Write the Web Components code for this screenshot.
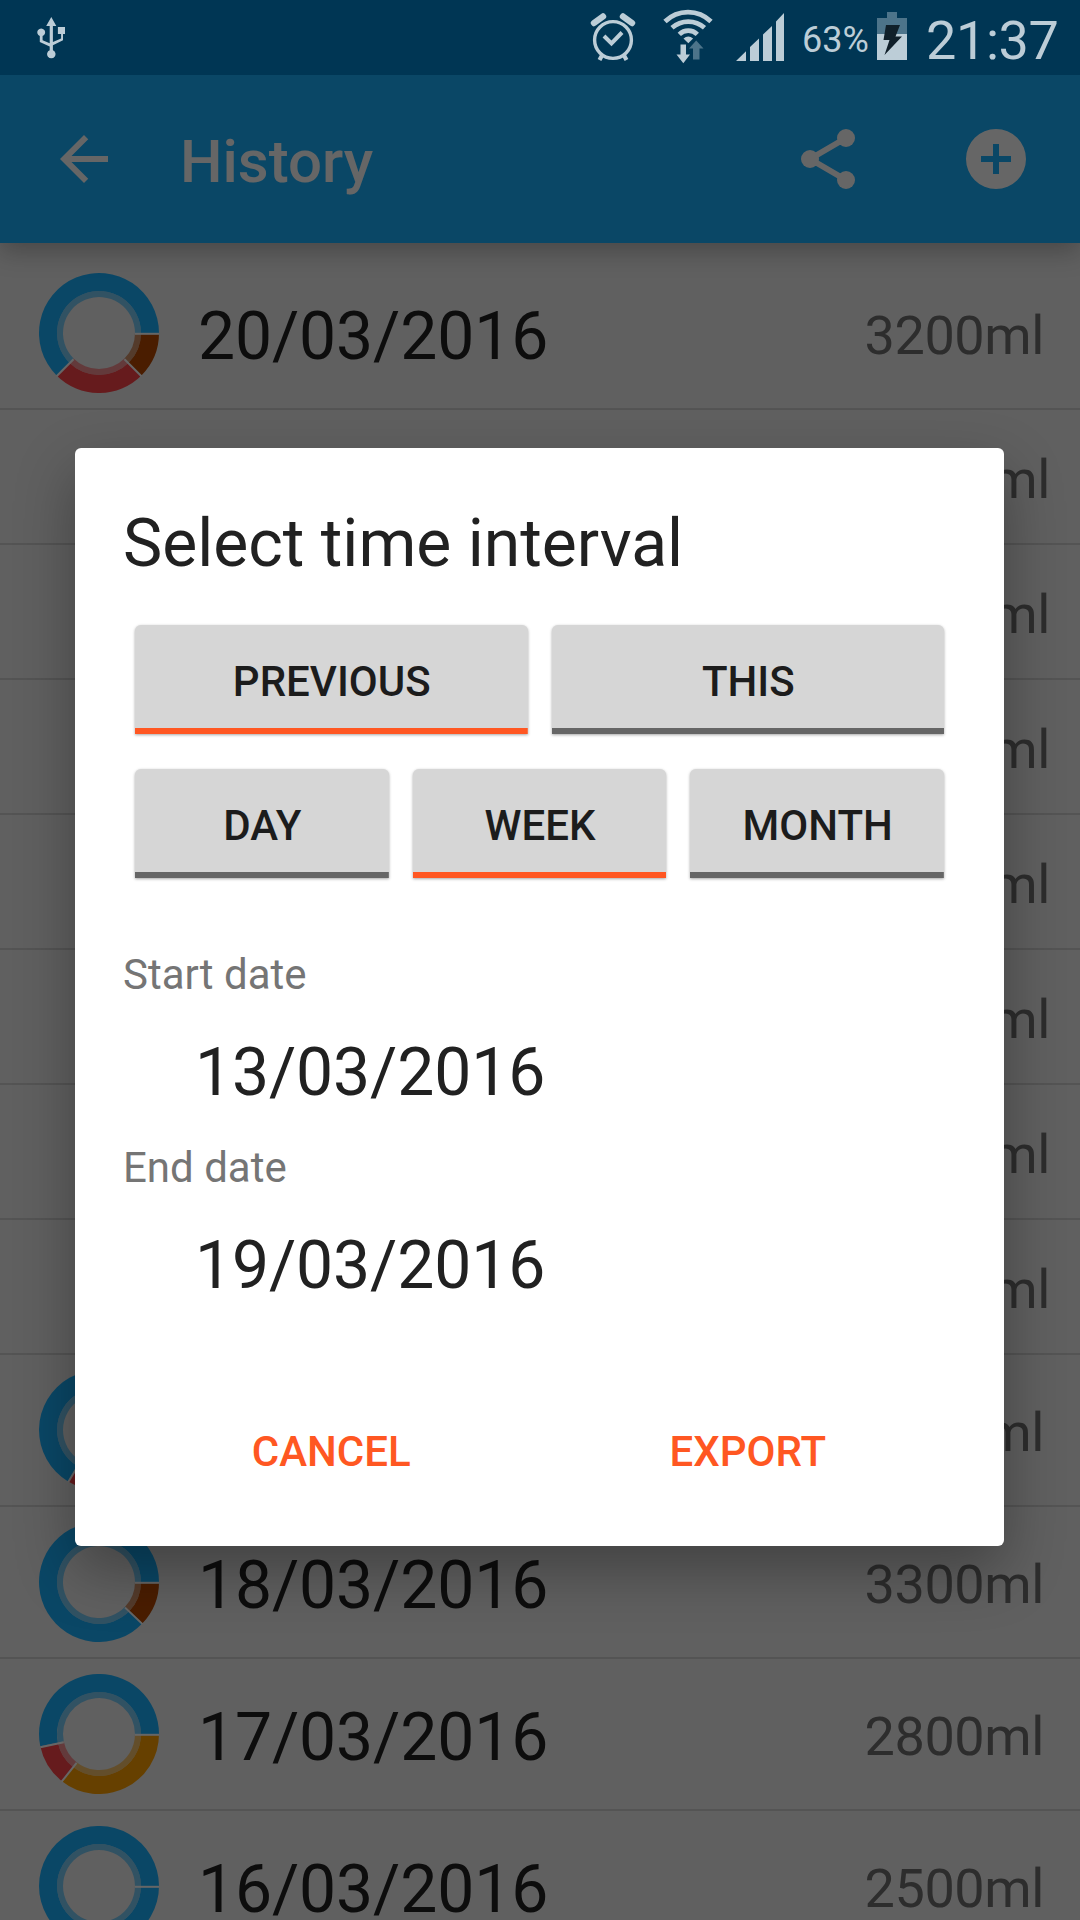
<!DOCTYPE html>
<html lang="en">
<head>
<meta charset="utf-8">
<title>History</title>
<style>
    body {
        margin: 0;
        width: 1080px;
        height: 1920px;
        overflow: hidden;
        background: #efefef;
        font-family: Roboto, "Liberation Sans", sans-serif;
    }
</style>
</head>
<body>
<history-app></history-app>

<script>
class StatusBar extends HTMLElement {

    constructor() {
        super();
        this.attachShadow({mode: "open"});
    }

    connectedCallback() {
        this.shadowRoot.innerHTML = `
        <style>
        :host {
            position: relative;
            z-index: 3;
            display: flex;
            align-items: flex-start;
            height: 75px;
            box-sizing: border-box;
            padding: 0 20px 0 36px;
            background: #003654;
            color: #bccdd7;
            fill: #bccdd7;
        }
        svg {
            display: block;
            flex: none;
            height: 75px;
        }
        .space {
            flex: 1;
        }
        .alarm {
            margin-right: 25px;
        }
        .wifi {
            margin-right: 21px;
        }
        .percent {
            width: 75px;
            margin-left: 18px;
            font-size: 36px;
            line-height: 80px;
            height: 75px;
        }
        .time {
            width: 134px;
            margin-left: 19px;
            font-size: 54px;
            line-height: 82px;
            height: 75px;
            letter-spacing: -0.4px;
            white-space: nowrap;
        }
        </style>
        <svg width="30" viewBox="36 0 30 75">
            <path d="M51.3 17l5 9h-3.4v16l8.2-3.5V34h-3.2v-7h7.1v7H63v6.2l-10.1 5v5a4.2 4.2 0 1 1-3.2 0v-3.8L39.8 42v-6a3.9 3.9 0 1 1 2.8 0v4.2l7.1 3V26h-3.5z"/>
        </svg>
        <div class="space"></div>
        <svg class="alarm" width="47" viewBox="590 0 47 75">
            <g fill="none" stroke="#bccdd7">
                <circle cx="613" cy="40" r="18.4" stroke-width="3.4"/>
                <path d="M604 36l7.5 7.5 10.5-11" stroke-width="4"/>
                <path d="M594 23l9-6.5M632 23l-9-6.5" stroke-width="6.4" stroke-linecap="round"/>
                <path d="M602.5 54.500l-3 5.500M623.500 54.500l3 5.500" stroke-width="4.200"/>
            </g>
        </svg>
        <svg class="wifi" width="53" viewBox="662 0 53 75">
            <g fill="none" stroke="#bccdd7" stroke-width="4.7">
                <path d="M665 21.500a32.700 32.700 0 0 1 46 0"/>
                <path d="M672 27.800a24.400 24.400 0 0 1 32.500 0"/>
                <path d="M679.300 34.300a12.800 12.800 0 0 1 18 0"/>
            </g>
            <path d="M683.500 38.500q4.800-4 9.600 0l-4.800 4.800z"/>
            <path d="M680.500 44.500h5.500v10h4l-6.700 8.800-6.800-8.800h4z"/>
            <path fill="#4d748a" d="M693 59.500h6.500v-11h4L696.200 40.500l-7.200 8h4z"/>
        </svg>
        <svg width="48" viewBox="736 0 48 75">
            <path d="M736 61l10-9.700V61zM750 61V47l9-8.500V61zM763 61V34.500l9-8.500v35zM776 61V21.500l8-8.500v48z"/>
        </svg>
        <div class="percent">63%</div>
        <svg width="30" viewBox="877 0 30 75">
            <path fill="#4d748a" d="M887 12h10v6h10v16h-30V18h10z"/>
            <path d="M877 34h30v26h-30z"/>
            <path fill="#10202a" d="M886 25h14l-4.500 11.500h6.500L884.500 55l5-15h-6z"/>
        </svg>
        <div class="time">21:37</div>
        `;
    }
}

class AppBar extends HTMLElement {

    constructor() {
        super();
        this.attachShadow({mode: "open"});
    }

    connectedCallback() {
        this.shadowRoot.innerHTML = `
        <style>
        :host {
            position: relative;
            z-index: 1;
            display: flex;
            align-items: center;
            height: 168px;
            box-sizing: border-box;
            padding: 0 48px;
            background: #19b1ff;
            color: #fff;
            box-shadow: 0 8px 24px rgba(0,0,0,0.26);
        }
        svg {
            display: block;
            width: 72px;
            height: 72px;
            fill: #fff;
        }
        h1 {
            flex: 1;
            margin: 0;
            padding: 5px 0 0 60px;
            font-size: 60px;
            line-height: 70px;
            font-weight: 500;
        }
        .add {
            margin-left: 96px;
        }
        </style>
        <svg viewBox="0 0 24 24"><path d="M20 11H7.830l5.590-5.590L12 4l-8 8 8 8 1.410-1.410L7.830 13H20z"/></svg>
        <h1><slot></slot></h1>
        <svg viewBox="0 0 24 24">
            <path d="M6 12L18 5M6 12l12 7" stroke="#fff" stroke-width="2"/>
            <circle cx="6" cy="12" r="3"/>
            <circle cx="18" cy="5" r="3"/>
            <circle cx="18" cy="19" r="3"/>
        </svg>
        <svg class="add" viewBox="0 0 24 24"><path d="M12 2a10 10 0 1 0 0 20 10 10 0 0 0 0-20zm5 11h-4v4h-2v-4H7v-2h4V7h2v4h4z"/></svg>
        `;
    }
}

const drinkColors = {
    water: "#19b1ff",
    juice: "#ff4449",
    coffee: "#b84900",
    beer: "#ffa000"
};

// segments="coffee:0.125 juice:0.375 water:1", each number is where the slice ends
class DrinkChart extends HTMLElement {

    constructor() {
        super();
        this.attachShadow({mode: "open"});
    }

    connectedCallback() {
        this.render();
    }

    point(part, radius) {
        const angle = part * Math.PI * 2;
        return `${(60 + radius * Math.cos(angle)).toFixed(2)} ${(60 + radius * Math.sin(angle)).toFixed(2)}`;
    }

    slice(from, to, outer, inner) {
        to = Math.min(to, from + 0.9999);
        const large = to - from > 0.5 ? 1 : 0;
        return `M${this.point(from, outer)}A${outer} ${outer} 0 ${large} 1 ${this.point(to, outer)}`
            + `L${this.point(to, inner)}A${inner} ${inner} 0 ${large} 0 ${this.point(from, inner)}z`;
    }

    render() {
        let from = 0;
        let slices = "";
        let lines = "";
        this.getAttribute("segments").split(" ").forEach(segment => {
            const [name, end] = segment.split(":");
            const color = drinkColors[name];
            slices += `<path fill="${color}" d="${this.slice(from, +end, 60, 42)}"/>`;
            slices += `<path fill="${color}" opacity="0.55" d="${this.slice(from, +end, 42, 36)}"/>`;
            lines += `<path d="M${this.point(from, 36)}L${this.point(from, 60)}"/>`;
            from = +end;
        });

        this.shadowRoot.innerHTML = `
        <style>
        :host {
            display: block;
            width: 120px;
            height: 120px;
        }
        svg {
            display: block;
        }
        </style>
        <svg width="120" height="120" viewBox="0 0 120 120">
            ${slices}
            <g stroke="#fff" stroke-width="2" transform="translate(0 0.8)">${lines}</g>
        </svg>
        `;
    }
}

class HistoryRow extends HTMLElement {

    constructor() {
        super();
        this.attachShadow({mode: "open"});
    }

    connectedCallback() {
        this.shadowRoot.innerHTML = `
        <style>
        :host {
            display: flex;
            align-items: center;
            height: 152px;
            box-sizing: border-box;
            padding: 0 36px 0 39px;
            border-bottom: 2px solid #d2d2d2;
        }
        :host([entry]) {
            height: 135px;
            padding-right: 30px;
        }
        .date {
            flex: 1;
            padding: 7px 0 0 39px;
            font-size: 66px;
            line-height: 76px;
            letter-spacing: -0.1px;
            color: #222;
        }
        .amount {
            padding-top: 5px;
            font-size: 54px;
            line-height: 62px;
            letter-spacing: -0.4px;
            color: #707070;
        }
        :host([entry]) .amount {
            padding-top: 7px;
        }
        </style>
        <slot name="chart"></slot>
        <div class="date"><slot name="date"></slot></div>
        <div class="amount"><slot></slot></div>
        `;
    }
}

class ToggleButton extends HTMLElement {

    constructor() {
        super();
        this.attachShadow({mode: "open"});
    }

    connectedCallback() {
        this.shadowRoot.innerHTML = `
        <style>
        :host {
            display: block;
            height: 109px;
            box-sizing: border-box;
            padding: 32px 0 0 1px;
            border-radius: 6px 6px 0 0;
            background: linear-gradient(#666, #666) bottom / 100% 6px no-repeat #d6d6d6;
            box-shadow: 0 1px 3px rgba(0,0,0,0.35);
            text-align: center;
            font-size: 42px;
            line-height: 49px;
            font-weight: 500;
            color: #1c1c1c;
        }
        :host([checked]) {
            background-image: linear-gradient(#ff5722, #ff5722);
        }
        </style>
        <slot></slot>
        `;
    }
}

class DateField extends HTMLElement {

    constructor() {
        super();
        this.attachShadow({mode: "open"});
    }

    connectedCallback() {
        this.shadowRoot.innerHTML = `
        <style>
        :host {
            display: block;
            height: 193px;
        }
        .label {
            font-size: 42px;
            line-height: 50px;
            color: #757575;
        }
        .value {
            padding: 35px 0 0 72px;
            font-size: 66px;
            line-height: 76px;
            letter-spacing: -0.1px;
            color: #212121;
        }
        </style>
        <div class="label">${this.getAttribute("label")}</div>
        <div class="value"><slot></slot></div>
        `;
    }
}

class IntervalDialog extends HTMLElement {

    constructor() {
        super();
        this.attachShadow({mode: "open"});
    }

    connectedCallback() {
        this.shadowRoot.innerHTML = `
        <style>
        :host {
            display: block;
            width: 929px;
            height: 1098px;
            box-sizing: border-box;
            padding: 58px 48px 0;
            border-radius: 6px;
            background: #fff;
            box-shadow: 0 24px 60px rgba(0,0,0,0.32);
        }
        h2 {
            margin: 0 0 43px;
            font-size: 66px;
            line-height: 76px;
            font-weight: 400;
            color: #212121;
        }
        .group {
            display: grid;
            grid-auto-flow: column;
            grid-auto-columns: 1fr;
            gap: 24px;
            margin: 0 12px 35px;
        }
        .dates {
            padding-top: 37px;
        }
        .actions {
            display: grid;
            grid-template-columns: 1fr 1fr;
            margin-top: 91px;
            text-align: center;
            font-size: 42px;
            line-height: 50px;
            font-weight: 500;
            color: #ff5722;
        }
        </style>
        <h2>Select time interval</h2>
        <div class="group">
            <toggle-button checked>PREVIOUS</toggle-button>
            <toggle-button>THIS</toggle-button>
        </div>
        <div class="group">
            <toggle-button>DAY</toggle-button>
            <toggle-button checked>WEEK</toggle-button>
            <toggle-button>MONTH</toggle-button>
        </div>
        <div class="dates">
            <date-field label="Start date">13/03/2016</date-field>
            <date-field label="End date">19/03/2016</date-field>
        </div>
        <div class="actions">
            <span>CANCEL</span>
            <span>EXPORT</span>
        </div>
        `;
    }
}

class HistoryApp extends HTMLElement {

    constructor() {
        super();
        this.attachShadow({mode: "open"});
    }

    connectedCallback() {
        const entries = "<history-row entry>ml</history-row>".repeat(7);

        this.shadowRoot.innerHTML = `
        <style>
        :host {
            position: relative;
            display: block;
            width: 1080px;
            height: 1920px;
            overflow: hidden;
        }
        .list {
            padding-top: 15px;
        }
        .scrim {
            position: absolute;
            inset: 0;
            z-index: 2;
            box-sizing: border-box;
            padding: 448px 0 0 75px;
            background: rgba(0,0,0,0.6);
        }
        </style>
        <status-bar></status-bar>
        <app-bar>History</app-bar>
        <div class="list">
            <history-row>
                <drink-chart slot="chart" segments="coffee:0.125 juice:0.375 water:1"></drink-chart>
                <span slot="date">20/03/2016</span>3200ml
            </history-row>
            ${entries}
            <history-row>
                <drink-chart slot="chart" segments="juice:0.336 water:1"></drink-chart>
                ml
            </history-row>
            <history-row>
                <drink-chart slot="chart" segments="coffee:0.121 water:1"></drink-chart>
                <span slot="date">18/03/2016</span>3300ml
            </history-row>
            <history-row>
                <drink-chart slot="chart" segments="beer:0.357 juice:0.467 water:1"></drink-chart>
                <span slot="date">17/03/2016</span>2800ml
            </history-row>
            <history-row>
                <drink-chart slot="chart" segments="water:1"></drink-chart>
                <span slot="date">16/03/2016</span>2500ml
            </history-row>
        </div>
        <div class="scrim">
            <interval-dialog></interval-dialog>
        </div>
        `;
    }
}

customElements.define("status-bar", StatusBar);
customElements.define("app-bar", AppBar);
customElements.define("drink-chart", DrinkChart);
customElements.define("history-row", HistoryRow);
customElements.define("toggle-button", ToggleButton);
customElements.define("date-field", DateField);
customElements.define("interval-dialog", IntervalDialog);
customElements.define("history-app", HistoryApp);
</script>
</body>
</html>
